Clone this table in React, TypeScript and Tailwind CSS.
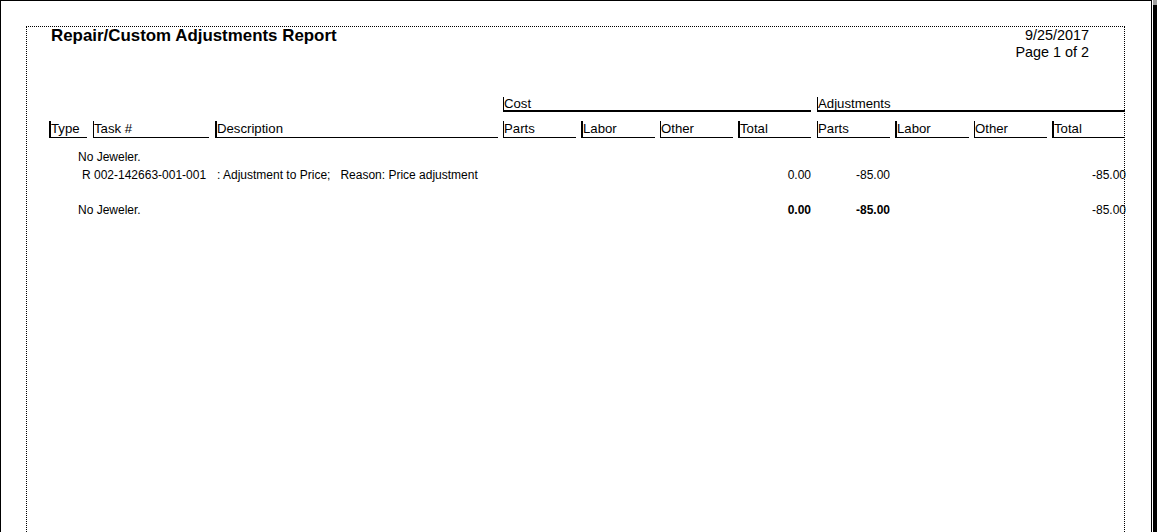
const font = "font-['Liberation_Sans',Arial,Helvetica,sans-serif]";

// column geometry (relative to the inner edge of the dotted frame)
const columns = [
  { key: "type", label: "Type", cls: "ml-[22px] w-[38px]", bar: "border-l-2" },
  { key: "task", label: "Task #", cls: "ml-[6px] w-[116px]", bar: "border-l" },
  { key: "desc", label: "Description", cls: "ml-[6px] w-[283px]", bar: "border-l-2" },
  { key: "cParts", label: "Parts", cls: "ml-[5px] w-[73px]", bar: "border-l" },
  { key: "cLabor", label: "Labor", cls: "ml-[5px] w-[74px]", bar: "border-l-2" },
  { key: "cOther", label: "Other", cls: "ml-[5px] w-[73px]", bar: "border-l" },
  { key: "cTotal", label: "Total", cls: "ml-[5px] w-[73px]", bar: "border-l-2" },
  { key: "aParts", label: "Parts", cls: "ml-[6px] w-[73px]", bar: "border-l" },
  { key: "aLabor", label: "Labor", cls: "ml-[5px] w-[74px]", bar: "border-l-2" },
  { key: "aOther", label: "Other", cls: "ml-[5px] w-[73px]", bar: "border-l" },
  { key: "aTotal", label: "Total", cls: "ml-[5px] w-[73px]", bar: "border-l-2" },
];

type Cells = Partial<Record<string, React.ReactNode>>;

function DataRow({ cells, className = "" }: { cells: Cells; className?: string }) {
  return (
    <div className={`flex h-[18px] text-[12px] leading-[18px] ${className}`}>
      {columns.map((c) => {
        const numeric = c.key !== "type" && c.key !== "task" && c.key !== "desc";
        return (
          <div
            key={c.key}
            className={`${c.cls} shrink-0 whitespace-pre ${numeric ? "flex justify-end" : ""}`}
          >
            {cells[c.key]}
          </div>
        );
      })}
    </div>
  );
}

function ReportHeader() {
  return (
    <>
      <div className="flex justify-between">
        <div className="pl-[24px] text-[16.9px] font-bold leading-[18px]">
          Repair/Custom Adjustments Report
        </div>
        <div className="pr-[35px] text-right text-[14.4px] leading-[17px]">
          <div>9/25/2017</div>
          <div>Page 1 of 2</div>
        </div>
      </div>

      {/* group headings */}
      <div className="mt-[36px] flex text-[13.2px] leading-[13px]">
        <div className="ml-[476px] h-[15px] w-[308px] shrink-0 border-b-2 border-l border-black">
          Cost
        </div>
        <div className="ml-[6px] h-[15px] w-[308px] shrink-0 border-b-2 border-l border-black">
          Adjustments
        </div>
      </div>

      {/* column headings */}
      <div className="mt-[9px] flex text-[13.2px] leading-[15px]">
        {columns.map((c) => (
          <div
            key={c.key}
            className={`${c.cls} ${c.bar} h-[17px] shrink-0 border-b border-black whitespace-nowrap`}
          >
            {c.label}
          </div>
        ))}
      </div>
    </>
  );
}

export default function App() {
  return (
    <div className={`flex h-[532px] w-[1157px] overflow-hidden bg-white text-black ${font}`}>
      <div className="h-[600px] w-[1152px] shrink-0 border-l border-r border-t border-black pl-[25px] pt-[25px]">
        <div className="h-[560px] w-[1099px] border border-dotted border-black">
          <ReportHeader />

          <div className="mt-[10px] ml-[51px] h-[18px] text-[12px] leading-[18px]">No Jeweler.</div>
          <DataRow
            cells={{
              type: <span className="pl-[33px]">R 002-142663-001-001</span>,
              desc: <span className="pl-[2px]">{": Adjustment to Price;   Reason: Price adjustment"}</span>,
              cTotal: "0.00",
              aParts: "-85.00",
              aTotal: <span className="mr-[-1px]">-85.00</span>,
            }}
          />

          <div className="mt-[17px] flex h-[18px] text-[12px] leading-[18px]">
            <div className="ml-[51px] w-[100px] shrink-0">No Jeweler.</div>
          </div>
          <DataRow
            className="mt-[-18px]"
            cells={{
              cTotal: <span className="font-bold">0.00</span>,
              aParts: <span className="font-bold">-85.00</span>,
              aTotal: <span className="mr-[-1px]">-85.00</span>,
            }}
          />
        </div>
      </div>
      <div className="w-px shrink-0" />
      <div className="flex w-[4px] shrink-0 flex-col">
        <div className="h-[5px] bg-[#a0a0a0]" />
        <div className="flex-1 bg-black" />
      </div>
    </div>
  );
}
